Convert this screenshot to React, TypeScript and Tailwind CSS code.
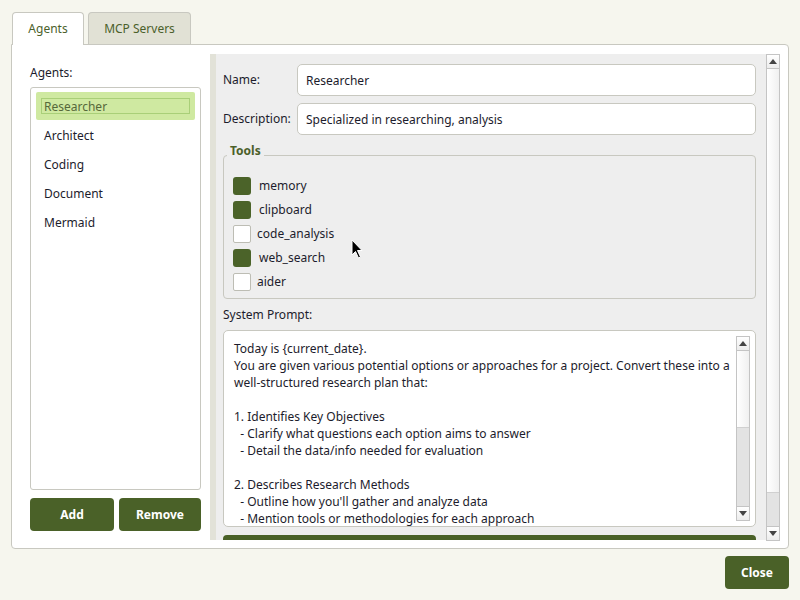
import React from "react";

const FONT = { fontFamily: '"Noto Sans", "Open Sans", sans-serif' };

const agents = ["Researcher", "Architect", "Coding", "Document", "Mermaid"];

const tools = [
  { name: "memory", on: true },
  { name: "clipboard", on: true },
  { name: "code_analysis", on: false },
  { name: "web_search", on: true },
  { name: "aider", on: false },
];

const promptLines = [
  "Today is {current_date}.",
  "You are given various potential options or approaches for a project. Convert these into a",
  "well-structured research plan that:",
  "",
  "1. Identifies Key Objectives",
  "  - Clarify what questions each option aims to answer",
  "  - Detail the data/info needed for evaluation",
  "",
  "2. Describes Research Methods",
  "  - Outline how you'll gather and analyze data",
  "  - Mention tools or methodologies for each approach",
];

function Arrow({ up }: { up?: boolean }) {
  return (
    <div className="h-[13px] flex items-center justify-center bg-gradient-to-b from-white to-[#ececec]">
      <svg width="8" height="5" viewBox="0 0 8 5">
        {up ? (
          <polygon points="4,0 8,5 0,5" fill="#444" />
        ) : (
          <polygon points="0,0 8,0 4,5" fill="#444" />
        )}
      </svg>
    </div>
  );
}

function ScrollBar({ thumb }: { thumb: number }) {
  return (
    <div className="w-[14px] h-full flex flex-col border border-[#c4c4c4] bg-[#e3e3e3]">
      <div className="border-b border-[#c4c4c4]">
        <Arrow up />
      </div>
      <div
        className="bg-gradient-to-r from-white to-[#f0f0f0] border-b border-[#d0d0d0]"
        style={{ height: thumb }}
      />
      <div className="flex-1" />
      <div className="border-t border-[#c4c4c4]">
        <Arrow />
      </div>
    </div>
  );
}

export default function App() {
  return (
    <div
      className="relative w-[800px] h-[600px] bg-[#f6f6ee] px-[11px] pt-3 text-[12px] leading-[18px] text-[#1c1c2c]"
      style={FONT}
    >
      {/* Tabs */}
      <div className="flex items-start pl-px h-8">
        <div className="relative z-10 w-[72px] h-[33px] pb-px bg-white border border-b-0 border-[#c8c8c0] rounded-t-[4px] flex items-center justify-center text-[#4b5f2b]">
          Agents
        </div>
        <div className="ml-1 w-[103px] h-8 bg-[#e1e1d5] border border-b-0 border-[#c8c8c0] rounded-t-[4px] flex items-center justify-center text-[#4b5f2b]">
          MCP Servers
        </div>
      </div>

      {/* Panel */}
      <div className="h-[505px] bg-white border border-[#c8c8c0] rounded-b-[4px] rounded-tr-[4px] flex">
        {/* Left column */}
        <div className="pl-[18px] pt-[18px] w-[189px] shrink-0 flex flex-col">
          <div className="h-[18px] leading-[18px] pt-px">Agents:</div>
          <div className="mt-1.5 h-[403px] border border-[#c8c8c0] rounded-[3px] bg-white px-[5px] pt-1">
            {agents.map((a, i) =>
              i === 0 ? (
                <div
                  key={a}
                  className="h-7 rounded-[2px] bg-[#cfe9a1] px-[5px] py-[6px] mb-px"
                >
                  <div className="h-4 border border-[#a9cf78] leading-[15px] pl-[2px] text-[#56683a]">
                    {a}
                  </div>
                </div>
              ) : (
                <div key={a} className="h-[29px] flex items-center pl-[8px] pt-px">
                  {a}
                </div>
              )
            )}
          </div>
          <div className="mt-2 flex gap-[5px]">
            <button className="w-[84px] h-[33px] rounded-[4px] bg-[#4a6128] text-white font-bold pt-px">
              Add
            </button>
            <button className="w-[82px] h-[33px] rounded-[4px] bg-[#4a6128] text-white font-bold pt-px">
              Remove
            </button>
          </div>
        </div>

        {/* Right scroll area */}
        <div className="ml-[9px] mt-[9px] mb-[8px] mr-[8px] flex-1 min-w-0 flex">
          <div className="w-[6px] shrink-0 bg-[#e2e2d8]" />
          <div className="flex-1 min-w-0 bg-[#eeeeee] overflow-hidden pl-[7px] pr-[10px] pt-[10px]">
            <div className="flex items-center h-8">
              <div className="w-[74px] shrink-0">Name:</div>
              <div className="flex-1 h-8 bg-white border border-[#c8c8c0] rounded-[5px] flex items-center pl-[8px] pt-px">
                Researcher
              </div>
            </div>
            <div className="flex items-center h-8 mt-[7px]">
              <div className="w-[74px] shrink-0">Description:</div>
              <div className="flex-1 h-8 bg-white border border-[#c8c8c0] rounded-[5px] flex items-center pl-[8px] pt-px">
                Specialized in researching, analysis
              </div>
            </div>

            {/* Tools group */}
            <div className="relative mt-5 h-[144px] border border-[#c8c8c0] rounded-[4px] pl-[9px] pt-[18px]">
              <div className="absolute -top-[14px] left-[3px] px-[3px] bg-[#eeeeee] font-bold text-[#4b6029] leading-[18px]">
                Tools
              </div>
              {tools.map((t) => (
                <div key={t.name} className="h-6 flex items-center">
                  <div
                    className={
                      t.on
                        ? "w-[18px] h-[18px] rounded-[3px] bg-[#4b6329]"
                        : "w-[18px] h-[18px] rounded-[2px] bg-white border border-[#bdbdb4]"
                    }
                  />
                  <span className={t.on ? "ml-2" : "ml-1.5"}>{t.name}</span>
                </div>
              ))}
            </div>

            <div className="mt-[6px] h-[18px] leading-[18px] pt-px">System Prompt:</div>

            {/* Textarea */}
            <div className="mt-[7px] h-[197px] bg-white border border-[#c8c8c0] rounded-[5px] flex overflow-hidden">
              <div className="flex-1 min-w-0 pl-[10px] pt-[9px] overflow-hidden">
                {promptLines.map((l, i) => (
                  <div key={i} className="h-[17px] leading-[17px] whitespace-pre">
                    {l}
                  </div>
                ))}
              </div>
              <div className="shrink-0 py-[5px] pr-[5px]">
                <ScrollBar thumb={77} />
              </div>
            </div>

            <div className="mt-2 h-[33px] bg-[#4a6128] rounded-[4px]" />
          </div>
          <div className="h-[487px] shrink-0">
            <ScrollBar thumb={424} />
          </div>
        </div>
      </div>

      {/* Footer */}
      <div className="flex justify-end mt-[7px]">
        <button className="w-[64px] h-[33px] rounded-[4px] bg-[#4a6128] text-white font-bold pt-px">
          Close
        </button>
      </div>

      {/* Mouse cursor */}
      <svg
        className="absolute left-[351px] top-[239px]"
        width="14"
        height="21"
        viewBox="0 0 14 21"
      >
        <path
          d="M1 1 L1 16 L4.5 12.5 L7.5 19 L9.5 18 L6.5 11.5 L11 11.5 Z"
          fill="#000"
          stroke="#fff"
          strokeWidth="1"
        />
      </svg>
    </div>
  );
}
